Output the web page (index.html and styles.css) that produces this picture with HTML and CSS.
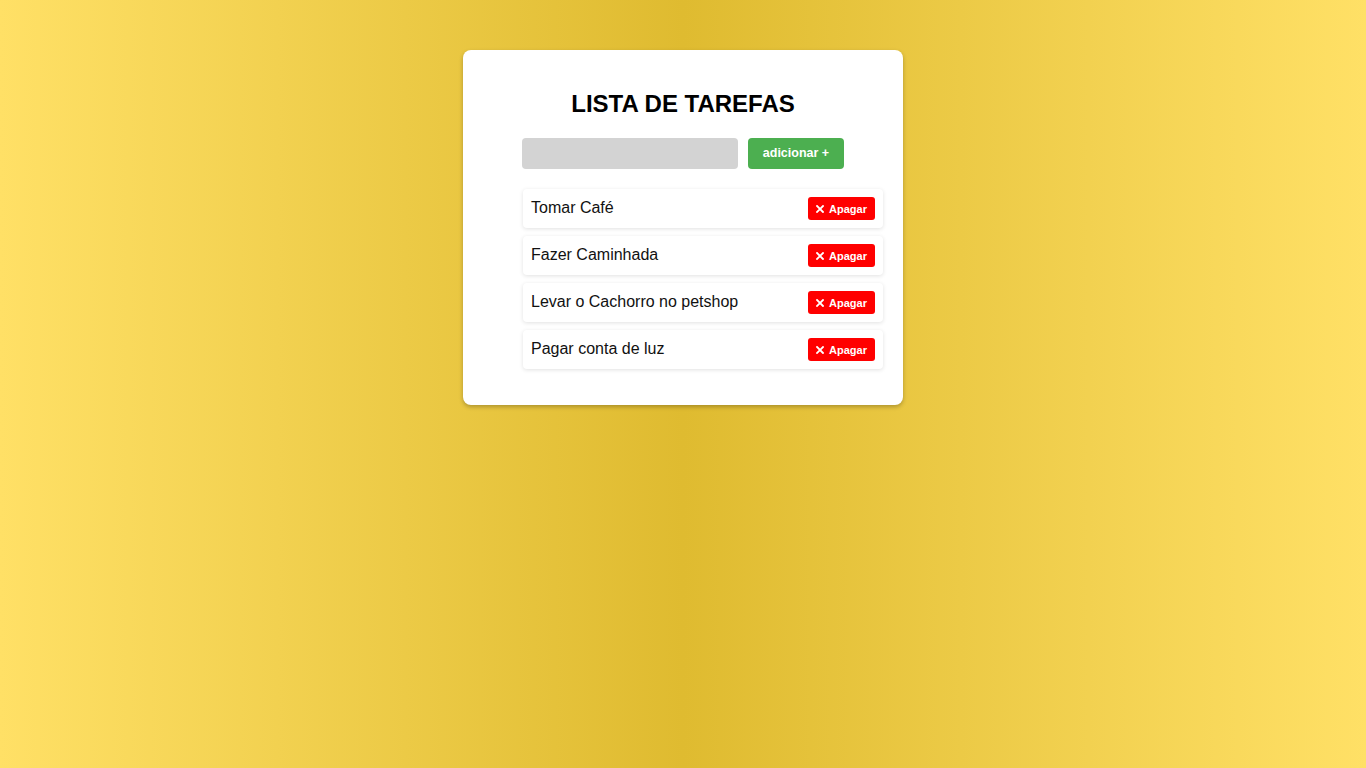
FILE: index.html
```html
<!DOCTYPE html>
<html lang="pt-BR">
<head>
<meta charset="utf-8">
<title>Lista de Tarefas</title>
<link rel="stylesheet" href="styles.css">
</head>
<body>
<main class="card">
  <h2 class="title">LISTA DE TAREFAS</h2>
  <div class="add-row">
    <input class="task-input" type="text">
    <button class="add-btn">adicionar +</button>
  </div>
  <ul class="tasks">
    <li class="task"><span class="task-text">Tomar Café</span><button class="del-btn"><svg class="x" viewBox="0 0 8 8" width="8" height="8"><path d="M1 1L7 7M7 1L1 7" stroke="#fff" stroke-width="1.8" stroke-linecap="square"/></svg>Apagar</button></li>
    <li class="task"><span class="task-text">Fazer Caminhada</span><button class="del-btn"><svg class="x" viewBox="0 0 8 8" width="8" height="8"><path d="M1 1L7 7M7 1L1 7" stroke="#fff" stroke-width="1.8" stroke-linecap="square"/></svg>Apagar</button></li>
    <li class="task"><span class="task-text">Levar o Cachorro no petshop</span><button class="del-btn"><svg class="x" viewBox="0 0 8 8" width="8" height="8"><path d="M1 1L7 7M7 1L1 7" stroke="#fff" stroke-width="1.8" stroke-linecap="square"/></svg>Apagar</button></li>
    <li class="task"><span class="task-text">Pagar conta de luz</span><button class="del-btn"><svg class="x" viewBox="0 0 8 8" width="8" height="8"><path d="M1 1L7 7M7 1L1 7" stroke="#fff" stroke-width="1.8" stroke-linecap="square"/></svg>Apagar</button></li>
  </ul>
</main>
</body>
</html>
```
FILE: styles.css
```css
html, body {
  margin: 0;
  height: 100%;
}
body {
  background: linear-gradient(to right, #ffe066 0%, #dfbb30 50%, #ffe066 100%);
  font-family: "Liberation Sans", Arial, sans-serif;
  padding-top: 50px;
  box-sizing: border-box;
}
.card {
  width: 440px;
  box-sizing: border-box;
  margin: 0 auto;
  background: #fff;
  border-radius: 8px;
  padding: 20px;
  box-shadow: 0 2px 4px rgba(0, 0, 0, 0.25);
}
.title {
  text-align: center;
  font-size: 24px;
  font-weight: bold;
  color: #000;
  margin: 19.92px 0;
}
.add-row {
  display: flex;
  justify-content: center;
  gap: 10px;
}
.task-input {
  width: 216px;
  height: 31px;
  box-sizing: border-box;
  border: none;
  border-radius: 4px;
  background: #d3d3d3;
  padding: 0 8px;
  outline: none;
}
.add-btn {
  width: 96px;
  height: 31px;
  border: none;
  border-radius: 4px;
  background: #4caf50;
  color: #fff;
  font-family: "Liberation Sans", Arial, sans-serif;
  font-weight: bold;
  font-size: 12.5px;
  padding: 0;
}
.tasks {
  list-style: none;
  margin: 20px 0 16px;
  padding-left: 40px;
}
.task {
  display: flex;
  align-items: center;
  justify-content: space-between;
  padding: 8px;
  margin-bottom: 8px;
  background: #fff;
  border-radius: 4px;
  box-shadow: 0 1px 4px rgba(0, 0, 0, 0.12);
}
.task-text {
  font-size: 16px;
  color: #111;
}
.del-btn {
  display: flex;
  align-items: center;
  justify-content: center;
  gap: 5px;
  width: 67px;
  height: 23px;
  border: none;
  border-radius: 3px;
  background: #ff0000;
  color: #fff;
  font-family: "Liberation Sans", Arial, sans-serif;
  font-size: 11px;
  font-weight: bold;
  padding: 2px 0 0;
}
.x {
  display: block;
}
```
